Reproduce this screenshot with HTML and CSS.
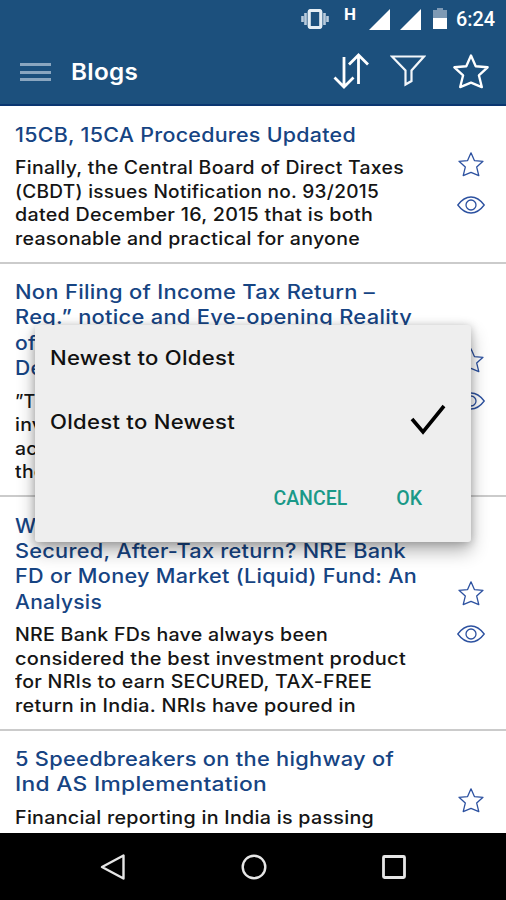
FILE: index.html
```html
<!DOCTYPE html>
<html lang="en">
<head>
<meta charset="utf-8">
<title>Blogs</title>
<link rel="stylesheet" href="styles.css">
</head>
<body>
<svg class="defs" aria-hidden="true">
  <symbol id="star" viewBox="0 0 26 26"><path d="M13 1.8 L16.4 9.6 L25 10.3 L18.7 16.1 L20.8 24.6 L13 21.4 L5.2 24.6 L7.3 16.1 L1 10.3 L9.6 9.6 Z" fill="none" stroke="currentColor" stroke-linejoin="round"/></symbol>
  <symbol id="eye" viewBox="0 0 28 18"><path d="M.8 9 C5 3.4 9.5 1 14 1 S23 3.4 27.2 9 C23 14.6 18.5 17 14 17 S5 14.6 .8 9 Z M19 9 A5 5 0 1 1 9 9 A5 5 0 1 1 19 9 Z" fill="none" stroke="currentColor" stroke-width="1.3"/></symbol>
</svg>
<div class="screen">
  <header class="top">
    <div class="status">
      <svg class="vibrate" viewBox="0 0 28 20"><path d="M1.5 7v6M4.5 4v12M23.5 4v12M26.5 7v6" stroke="#b9cbdc" stroke-width="2.6"/><rect x="8.2" y="1.5" width="11.6" height="17" rx="1.5" fill="none" stroke="#e4edf4" stroke-width="3.2"/></svg>
      <span class="net">H</span>
      <svg class="signal" viewBox="0 0 21 21"><path d="M21 0V21H0Z" fill="#fff"/></svg>
      <svg class="signal second" viewBox="0 0 21 21"><path d="M21 0V21H0Z" fill="#fff"/></svg>
      <svg class="battery" viewBox="0 0 14 21"><path d="M4 0h6v2h4v9H0V2h4Z" fill="#7e9ab5"/><path d="M0 10h14v11H0Z" fill="#fff"/></svg>
      <span class="clock fit" data-w="39">6:24</span>
    </div>
    <div class="bar">
      <div class="burger"><i></i><i></i><i></i></div>
      <h1><span class="fit" data-w="67">Blogs</span></h1>
      <svg class="sort" viewBox="0 0 36 36"><path d="M11 4V34M1.5 24.5 11 34l9.500-9.500M25.500 31V2M16 11.500l9.500-9.500 9.500 9.500" fill="none" stroke="#fff" stroke-width="2.800"/></svg>
      <svg class="filter" viewBox="0 0 36 32"><path d="M2 1.500H34L21.500 15.500V26l-6 3.500V15.500Z" fill="none" stroke="#f2f6fa" stroke-width="2.200"/></svg>
      <svg class="fav"><use href="#star"/></svg>
    </div>
  </header>
  <main class="list">
    <article class="item">
      <div class="copy">
        <h2><span class="fit" data-w="341">15CB, 15CA Procedures Updated</span></h2>
        <p><span class="fit" data-w="389">Finally, the Central Board of Direct Taxes</span><span class="fit" data-w="364">(CBDT) issues Notification no. 93/2015</span><span class="fit" data-w="358">dated December 16, 2015 that is both</span><span class="fit" data-w="345">reasonable and practical for anyone</span></p>
      </div>
      <div class="actions"><svg class="star"><use href="#star"/></svg><svg class="eye"><use href="#eye"/></svg></div>
    </article>
    <article class="item">
      <div class="copy">
        <h2><span class="fit" data-w="360">Non Filing of Income Tax Return –</span><span class="fit" data-w="397">Reg.” notice and Eye-opening Reality</span><span class="wide">of</span><span class="wide">De</span></h2>
        <p><span>”Th</span><span class="wide">inv</span><span class="wide">ac</span><span class="wide">the</span></p>
      </div>
      <div class="actions"><svg class="star"><use href="#star"/></svg><svg class="eye"><use href="#eye"/></svg></div>
    </article>
    <article class="item">
      <div class="copy">
        <h2><span class="wide">W</span><span class="fit" data-w="391">Secured, After-Tax return? NRE Bank</span><span class="fit" data-w="402">FD or Money Market (Liquid) Fund: An</span><span class="fit" data-w="87">Analysis</span></h2>
        <p><span class="fit" data-w="313">NRE Bank FDs have always been</span><span class="fit" data-w="391">considered the best investment product</span><span class="fit" data-w="357">for NRIs to earn SECURED, TAX-FREE</span><span class="fit" data-w="341">return in India. NRIs have poured in</span></p>
      </div>
      <div class="actions"><svg class="star"><use href="#star"/></svg><svg class="eye"><use href="#eye"/></svg></div>
    </article>
    <article class="item last">
      <div class="copy">
        <h2><span class="fit" data-w="379">5 Speedbreakers on the highway of</span><span class="fit" data-w="252">Ind AS Implementation</span></h2>
        <p><span class="fit" data-w="359">Financial reporting in India is passing</span></p>
      </div>
      <div class="actions"><svg class="star"><use href="#star"/></svg></div>
    </article>
  </main>
  <nav class="nav">
    <svg viewBox="0 0 28 28"><path d="M24.500 2.500V25.500L3 14Z" fill="none" stroke="#e6e6e6" stroke-width="2.400" stroke-linejoin="round"/></svg>
    <svg viewBox="0 0 28 28"><circle cx="14" cy="14" r="11.300" fill="none" stroke="#e6e6e6" stroke-width="2.400"/></svg>
    <svg viewBox="0 0 28 28"><rect x="3.500" y="3.500" width="21" height="21" rx="1" fill="none" stroke="#e6e6e6" stroke-width="2.800"/></svg>
  </nav>
  <div class="dialog">
    <div class="option"><span class="fit" data-w="185">Newest to Oldest</span></div>
    <div class="option"><span class="fit" data-w="185">Oldest to Newest</span>
      <svg class="check" viewBox="0 0 36 32"><path d="M2 15 13 28 34 2" fill="none" stroke="#000" stroke-width="3.600"/></svg></div>
    <div class="buttons"><span>CANCEL</span><span>OK</span></div>
  </div>
</div>
<script src="fit.js"></script>
</body>
</html>
```
FILE: styles.css
```css
* { box-sizing: border-box; }
body { margin: 0; font-family: Inter, "Liberation Sans", sans-serif; font-weight: 500; background: #fff; }
svg { display: block; flex: none; }
.defs { display: none; }
.screen { position: relative; width: 506px; height: 900px; display: flex; flex-direction: column; overflow: hidden; }
.fit, .wide { display: block; width: max-content; white-space: pre; letter-spacing: .25px; transform-origin: 0 50%; }
.wide { transform: scaleX(1.08); }

.top { height: 106px; flex: none; background: #1c507d; border-bottom: 2px solid #0a3670; color: #fff; }
.status { height: 38px; display: flex; align-items: center; padding-left: 301px; }
.vibrate { width: 28px; height: 20px; }
.net { width: 14px; margin: 0 0 10px 15px; font: 700 17px/16px Roboto, sans-serif; }
.signal { width: 21px; height: 21px; margin-left: 11px; }
.signal.second { margin-left: 10px; }
.battery { width: 14px; height: 21px; margin: 0 9px 2px 12px; }
.clock { font: 500 20px/24px Roboto, sans-serif; letter-spacing: 0; }
.bar { height: 66px; display: flex; align-items: center; padding-left: 20px; }
.burger { width: 31px; height: 18px; display: flex; flex-direction: column; justify-content: space-between; margin-top: 2px; }
.burger i { height: 3px; background: #8aa6c0; }
h1 { width: 262px; margin: 2px 0 0 20px; font-size: 22.5px; line-height: 30px; font-weight: 600; }
.sort { width: 36px; height: 36px; }
.filter { width: 36px; height: 32px; margin-left: 21px; }
.fav { width: 36px; height: 36px; margin-left: 27px; margin-top: -1px; stroke-width: 1.7; }

.list { height: 727px; flex: none; overflow: hidden; }
.item { display: flex; padding: 16.5px 0 11.5px 15px; border-bottom: 2px solid #cbcbcb; }
.item.last { height: 183px; }
.copy { width: 421px; }
h2, p { margin: 0; }
h2 span, p span { display: block; width: max-content; }
h2 { font-size: 19.5px; line-height: 25.3px; font-weight: 500; color: #164483; }
p { margin-top: 8.7px; font-size: 18px; line-height: 23.4px; color: #151515; }
.actions { width: 70px; display: flex; flex-direction: column; align-items: center; justify-content: center; gap: 19px; padding-bottom: 7px; color: #2c51a0; }
.star { width: 26px; height: 26px; stroke-width: 1.3; }
.eye { width: 28px; height: 18px; }
.last .actions { justify-content: flex-start; padding-top: 40px; }

.nav { flex: 1; background: #000; display: flex; align-items: center; justify-content: space-between; padding: 0 98px 0 99px; }
.nav svg { width: 28px; height: 28px; }

.dialog { position: absolute; left: 35px; top: 325px; width: 436px; height: 217px; padding-left: 15px; background: #eee; border-radius: 3px; box-shadow: 0 9px 18px rgba(0,0,0,.3), 0 1px 8px rgba(0,0,0,.22); }
.option { height: 64px; display: flex; align-items: center; justify-content: space-between; padding: 1px 25px 0 0; font-size: 19.5px; color: #111; }
.check { width: 36px; height: 32px; margin-top: -3px; }
.buttons { display: flex; justify-content: flex-end; gap: 49px; margin-top: 34px; padding-right: 49px; font: 500 19.5px/24px Roboto, sans-serif; color: #1a9988; }
```
FILE: fit.js
```js
// Widens each line of text so it fills its intended measure.
document.querySelectorAll('.fit').forEach(function (el) {
  var natural = el.getBoundingClientRect().width;
  el.style.transform = 'scaleX(' + (Number(el.dataset.w) / natural).toFixed(4) + ')';
});
```
